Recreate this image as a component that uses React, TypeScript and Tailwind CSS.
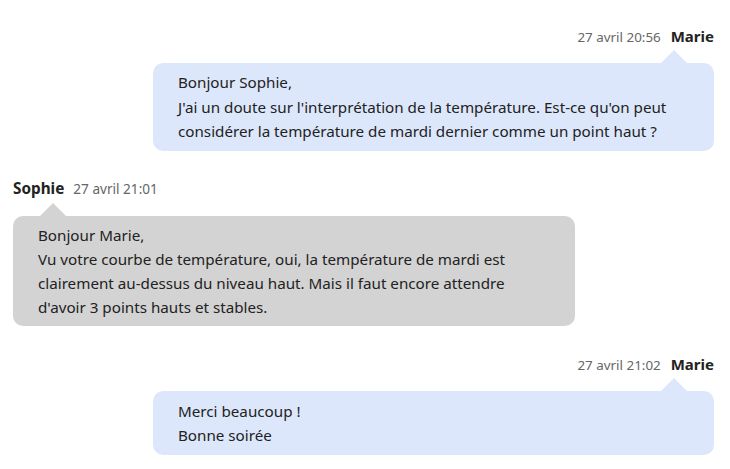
export default function App() {
  const font = { fontFamily: '"Noto Sans", "Open Sans", sans-serif' };
  return (
    <div className="min-h-screen bg-white pt-[26px] pl-[13px] pr-[16px] text-[#222]" style={font}>
      {/* Message 1 */}
      <div className="flex flex-col items-end">
        <div className="flex items-baseline h-[20px] gap-[10px] leading-[20px]">
          <span className="text-[13.4px] text-[#666]">27 avril 20:56</span>
          <span className="text-[15px] font-bold text-[#222]">Marie</span>
        </div>
        <div className="relative mt-[17px] w-[561px] rounded-[10px] bg-[#dde7fb] px-[25px] py-[7px] text-[15.2px] leading-[24.5px]">
          <div className="absolute -top-[13px] right-[27px] h-0 w-0 border-x-[13px] border-b-[13px] border-x-transparent border-b-[#dde7fb]" />
          <div className="whitespace-nowrap">Bonjour Sophie,</div>
          <div className="whitespace-nowrap">J'ai un doute sur l'interprétation de la température. Est-ce qu'on peut</div>
          <div className="whitespace-nowrap">considérer la température de mardi dernier comme un point haut ?</div>
        </div>
      </div>

      {/* Message 2 */}
      <div className="mt-[27px] flex flex-col items-start">
        <div className="flex items-baseline h-[20px] gap-[9px] leading-[20px]">
          <span className="text-[15.3px] font-bold text-[#222]">Sophie</span>
          <span className="text-[13.6px] text-[#666]">27 avril 21:01</span>
        </div>
        <div className="relative mt-[18px] w-[562px] rounded-[10px] bg-[#d3d3d3] px-[25px] py-[7px] text-[15.2px] leading-[24px]">
          <div className="absolute -top-[13px] left-[27px] h-0 w-0 border-x-[13px] border-b-[13px] border-x-transparent border-b-[#d3d3d3]" />
          <div className="whitespace-nowrap">Bonjour Marie,</div>
          <div className="whitespace-nowrap">Vu votre courbe de température, oui, la température de mardi est</div>
          <div className="whitespace-nowrap">clairement au-dessus du niveau haut. Mais il faut encore attendre</div>
          <div className="whitespace-nowrap">d'avoir 3 points hauts et stables.</div>
        </div>
      </div>

      {/* Message 3 */}
      <div className="mt-[28px] flex flex-col items-end">
        <div className="flex items-baseline h-[20px] gap-[10px] leading-[20px]">
          <span className="text-[13.4px] text-[#666]">27 avril 21:02</span>
          <span className="text-[15px] font-bold text-[#222]">Marie</span>
        </div>
        <div className="relative mt-[17px] w-[561px] rounded-[10px] bg-[#dde7fb] px-[25px] pt-[8px] pb-[7px] text-[15.2px] leading-[24.5px]">
          <div className="absolute -top-[13px] right-[27px] h-0 w-0 border-x-[13px] border-b-[13px] border-x-transparent border-b-[#dde7fb]" />
          <div className="whitespace-nowrap">Merci beaucoup !</div>
          <div className="whitespace-nowrap">Bonne soirée</div>
        </div>
      </div>
    </div>
  );
}
